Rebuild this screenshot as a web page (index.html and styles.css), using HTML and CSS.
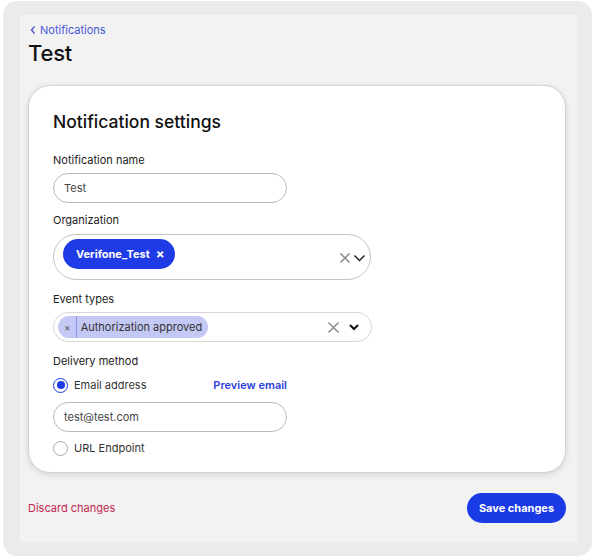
FILE: index.html
```html
<!DOCTYPE html>
<html>
<head>
<meta charset="utf-8">
<link rel="stylesheet" href="styles.css">
</head>
<body>
<div class="frame">
  <div class="panel">
    <a class="back" href="#"><svg width="8" height="10" viewBox="0 0 8 10"><path d="M5.5 1.5 L2.5 5 L5.5 8.5" fill="none" stroke="currentColor" stroke-width="1.4"/></svg>Notifications</a>
    <h1 class="title">Test</h1>
    <div class="card">
      <h2 class="card-title">Notification settings</h2>
      <div class="label first">Notification name</div>
      <div class="input">Test</div>
      <div class="label org">Organization</div>
      <div class="select select-tall">
        <span class="chip-blue">Verifone_Test <span class="chip-x">×</span></span>
        <span class="select-icons">
          <svg width="12" height="12" viewBox="0 0 12 12"><path d="M1.5 1.5 L10.5 10.5 M10.5 1.5 L1.5 10.5" stroke="#8a8a8a" stroke-width="1.5"/></svg>
          <svg width="13" height="12" viewBox="0 0 13 12"><path d="M1.5 3.5 L6.5 8.5 L11.5 3.5" fill="none" stroke="#222" stroke-width="1.5"/></svg>
        </span>
      </div>
      <div class="label ev">Event types</div>
      <div class="select select-short">
        <span class="chip-light"><span class="chip-light-x">×</span><span class="chip-light-text">Authorization approved</span></span>
        <span class="select-icons wide">
          <svg width="13" height="13" viewBox="0 0 13 13"><path d="M1.5 1.5 L11.5 11.5 M11.5 1.5 L1.5 11.5" stroke="#8a8a8a" stroke-width="1.5"/></svg>
          <svg width="12" height="12" viewBox="0 0 12 12"><path d="M2 4 L6 8 L10 4" fill="none" stroke="#111" stroke-width="2.2"/></svg>
        </span>
      </div>
      <div class="label dm">Delivery method</div>
      <div class="radio-row email-row">
        <span class="radio-wrap"><span class="radio checked"></span>Email address</span>
        <a class="preview" href="#">Preview email</a>
      </div>
      <div class="input email">test@test.com</div>
      <div class="radio-row url-row">
        <span class="radio-wrap"><span class="radio"></span>URL Endpoint</span>
      </div>
    </div>
    <div class="footer">
      <a class="discard" href="#">Discard changes</a>
      <button class="save">Save changes</button>
    </div>
  </div>
</div>
</body>
</html>
```

FILE: styles.css
```css
* { box-sizing: border-box; }
body {
  margin: 0;
  background: #ffffff;
  font-family: Inter, "Liberation Sans", sans-serif;
  color: #222;
}
.frame {
  margin: 1px 0 0 3px;
  width: 589px;
  height: 555px;
  border-radius: 14px;
  background: #ebebea;
  padding: 14px 0 0 17px;
}
.panel {
  width: 557px;
  height: 527px;
  background: #f2f2f2;
  padding: 7px 8px 0 8px;
}
.back {
  display: flex;
  align-items: center;
  gap: 3px;
  height: 16px;
  font-size: 11px;
  color: #4a58d6;
  text-decoration: none;
  padding-left: 1px;
}
.title {
  margin: 1px 0 0 0;
  font-size: 22px;
  line-height: 28px;
  font-weight: 500;
  color: #111;
  letter-spacing: -0.2px;
}
.card {
  margin-top: 18px;
  width: 538px;
  height: 388px;
  background: #fff;
  border: 1px solid #d2d2d2;
  border-radius: 22px;
  box-shadow: 0 2px 6px rgba(0,0,0,0.12);
  padding: 25px 0 0 24px;
}
.card-title {
  margin: 0;
  font-size: 17.5px;
  line-height: 22px;
  font-weight: 500;
  color: #111;
}
.label {
  font-size: 11px;
  line-height: 16px;
  margin-top: 10px;
  margin-bottom: 6px;
  color: #222;
}
.label.first { margin-top: 19px; margin-bottom: 5px; }
.label.org { margin-top: 9px; }
.label.ev { margin-top: 11px; }
.label.dm { margin-top: 11px; }
.input {
  width: 234px;
  height: 30px;
  border: 1px solid #b9b9b9;
  border-radius: 15px;
  font-size: 11px;
  display: flex;
  align-items: center;
  padding-left: 10px;
  color: #444;
}
.select {
  display: flex;
  align-items: center;
  border: 1px solid #c4c4c4;
  position: relative;
}
.select-tall {
  width: 318px;
  height: 46px;
  border-radius: 23px;
  padding-left: 9px;
}
.select-short {
  width: 319px;
  height: 30px;
  border-radius: 15px;
  padding-left: 4px;
  border-color: #d6d6d6;
  margin-top: -1px;
}
.chip-blue {
  display: inline-flex;
  align-items: center;
  height: 30px;
  padding: 0 10px 0 13px;
  border-radius: 15px;
  background: #1f3be6;
  color: #fff;
  font-size: 11px;
  font-weight: 700;
  margin-top: -6px;
}
.chip-x { margin-left: 6px; font-size: 13px; font-weight: 700; }
.select-icons {
  margin-left: auto;
  margin-right: 4px;
  display: flex;
  align-items: center;
  gap: 2px;
  margin-top: 2px;
}
.select-icons.wide { gap: 8px; margin-right: 11px; margin-top: 0; }
.chip-light {
  display: inline-flex;
  align-items: center;
  height: 22px;
  border-radius: 11px;
  background: #c3c8f4;
  font-size: 11px;
  color: #333;
}
.chip-light-x {
  font-size: 10px;
  color: #555;
  padding: 0 5px 0 6px;
  height: 22px;
  display: flex;
  align-items: center;
  border-right: 1px solid #8d95e0;
}
.chip-light-text { padding: 0 6px 0 4px; }
.radio-row {
  display: flex;
  align-items: center;
  justify-content: space-between;
  width: 234px;
  height: 18px;
  font-size: 11px;
  color: #333;
}
.email-row { margin-top: 7px; }
.input.email { margin-top: 8px; }
.url-row { margin-top: 7px; }
.radio-wrap { display: flex; align-items: center; gap: 6px; }
.radio {
  width: 15px;
  height: 15px;
  border-radius: 50%;
  border: 1px solid #a8a8a8;
  display: inline-block;
  position: relative;
  background: #fff;
}
.radio.checked { border: 1.5px solid #1f3be6; }
.radio.checked::after {
  content: "";
  position: absolute;
  left: 50%;
  top: 50%;
  width: 8px;
  height: 8px;
  margin: -4px 0 0 -4px;
  border-radius: 50%;
  background: #1f3be6;
}
.preview {
  color: #2b40d8;
  font-weight: 600;
  text-decoration: none;
  font-size: 11px;
}
.footer {
  margin-top: 20px;
  width: 538px;
  display: flex;
  justify-content: space-between;
  align-items: center;
}
.discard {
  color: #c4274f;
  font-size: 11px;
  text-decoration: none;
}
.save {
  width: 99px;
  height: 30px;
  border: none;
  border-radius: 15px;
  background: #1a3ae6;
  color: #fff;
  font-family: Inter, "Liberation Sans", sans-serif;
  font-size: 11px;
  font-weight: 700;
  padding: 0;
}
```
